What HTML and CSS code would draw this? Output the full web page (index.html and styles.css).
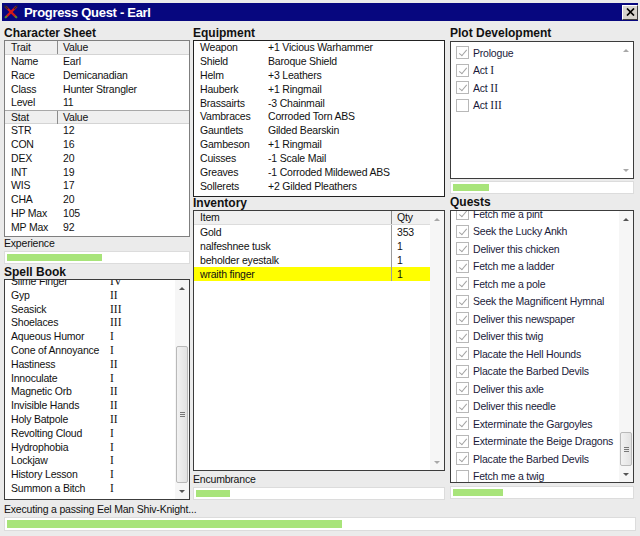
FILE: index.html
```html
<!DOCTYPE html>
<html>
<head>
<meta charset="utf-8">
<title>Progress Quest - Earl</title>
<link rel="stylesheet" href="styles.css">
</head>
<body>
<div class="window">
  <div class="titlebar">
    <svg class="app-icon" width="14" height="14" viewBox="0 0 14 14">
      <path d="M1.5 1.5 L12.5 12.5" stroke="#d41a1a" stroke-width="2.4"/>
      <path d="M12.5 1.5 L1.5 12.5" stroke="#d41a1a" stroke-width="2.4"/>
      <path d="M0.5 0.5 L4 4" stroke="#2a2a2a" stroke-width="1.6"/>
      <path d="M10 4 L13.5 0.5" stroke="#2a2a2a" stroke-width="1.2"/>
      <path d="M1 13 L3 11" stroke="#3aa13a" stroke-width="1.6"/>
      <path d="M11 11 L13 13" stroke="#3aa13a" stroke-width="1.6"/>
    </svg>
    <span class="title">Progress Quest - Earl</span>
    <div class="close">
      <svg width="9" height="8" viewBox="0 0 9 8"><path d="M1 0.5 L8 7.5 M8 0.5 L1 7.5" stroke="#000" stroke-width="1.7"/></svg>
    </div>
  </div>

  <div class="columns">
    <!-- LEFT -->
    <div class="col">
      <h2 class="heading">Character Sheet</h2>
      <div class="box sheet">
        <div class="thead"><span class="c1">Trait</span><span class="c2">Value</span></div>
        <div class="tr"><span class="c1">Name</span><span class="c2">Earl</span></div>
        <div class="tr"><span class="c1">Race</span><span class="c2">Demicanadian</span></div>
        <div class="tr"><span class="c1">Class</span><span class="c2">Hunter Strangler</span></div>
        <div class="tr"><span class="c1">Level</span><span class="c2">11</span></div>
        <div class="thead second"><span class="c1">Stat</span><span class="c2">Value</span></div>
        <div class="tr"><span class="c1">STR</span><span class="c2">12</span></div>
        <div class="tr"><span class="c1">CON</span><span class="c2">16</span></div>
        <div class="tr"><span class="c1">DEX</span><span class="c2">20</span></div>
        <div class="tr"><span class="c1">INT</span><span class="c2">19</span></div>
        <div class="tr"><span class="c1">WIS</span><span class="c2">17</span></div>
        <div class="tr"><span class="c1">CHA</span><span class="c2">20</span></div>
        <div class="tr"><span class="c1">HP Max</span><span class="c2">105</span></div>
        <div class="tr"><span class="c1">MP Max</span><span class="c2">92</span></div>
      </div>
      <div class="label">Experience</div>
      <div class="bar"><div class="fill" style="width:53%"></div></div>
      <h2 class="heading spell-heading">Spell Book</h2>
      <div class="box listbox spells">
        <div class="list">
          <div class="list-inner spell-rows">
            <div class="sr"><span>Slime Finger</span><span class="rn">IV</span></div>
            <div class="sr"><span>Gyp</span><span class="rn">II</span></div>
            <div class="sr"><span>Seasick</span><span class="rn">III</span></div>
            <div class="sr"><span>Shoelaces</span><span class="rn">III</span></div>
            <div class="sr"><span>Aqueous Humor</span><span class="rn">I</span></div>
            <div class="sr"><span>Cone of Annoyance</span><span class="rn">I</span></div>
            <div class="sr"><span>Hastiness</span><span class="rn">II</span></div>
            <div class="sr"><span>Innoculate</span><span class="rn">I</span></div>
            <div class="sr"><span>Magnetic Orb</span><span class="rn">II</span></div>
            <div class="sr"><span>Invisible Hands</span><span class="rn">II</span></div>
            <div class="sr"><span>Holy Batpole</span><span class="rn">II</span></div>
            <div class="sr"><span>Revolting Cloud</span><span class="rn">I</span></div>
            <div class="sr"><span>Hydrophobia</span><span class="rn">I</span></div>
            <div class="sr"><span>Lockjaw</span><span class="rn">I</span></div>
            <div class="sr"><span>History Lesson</span><span class="rn">I</span></div>
            <div class="sr"><span>Summon a Bitch</span><span class="rn">I</span></div>
          </div>
        </div>
        <div class="scrollbar">
          <div class="sb-btn"><span class="arrow up"></span></div>
          <div class="track"><div class="thumb spell-thumb"><span class="grip"></span></div></div>
          <div class="sb-btn"><span class="arrow down"></span></div>
        </div>
      </div>
    </div>

    <!-- MIDDLE -->
    <div class="col">
      <h2 class="heading">Equipment</h2>
      <div class="box equip">
        <div class="er"><span>Weapon</span><span>+1 Vicious Warhammer</span></div>
        <div class="er"><span>Shield</span><span>Baroque Shield</span></div>
        <div class="er"><span>Helm</span><span>+3 Leathers</span></div>
        <div class="er"><span>Hauberk</span><span>+1 Ringmail</span></div>
        <div class="er"><span>Brassairts</span><span>-3 Chainmail</span></div>
        <div class="er"><span>Vambraces</span><span>Corroded Torn ABS</span></div>
        <div class="er"><span>Gauntlets</span><span>Gilded Bearskin</span></div>
        <div class="er"><span>Gambeson</span><span>+1 Ringmail</span></div>
        <div class="er"><span>Cuisses</span><span>-1 Scale Mail</span></div>
        <div class="er"><span>Greaves</span><span>-1 Corroded Mildewed ABS</span></div>
        <div class="er"><span>Sollerets</span><span>+2 Gilded Pleathers</span></div>
      </div>
      <h2 class="heading">Inventory</h2>
      <div class="box listbox inventory">
        <div class="list">
          <div class="ihead"><span class="i1">Item</span><span class="i2">Qty</span></div>
          <div class="ir"><span class="i1">Gold</span><span class="i2">353</span></div>
          <div class="ir"><span class="i1">nalfeshnee tusk</span><span class="i2">1</span></div>
          <div class="ir"><span class="i1">beholder eyestalk</span><span class="i2">1</span></div>
          <div class="ir selected"><span class="i1">wraith finger</span><span class="i2">1</span></div>
        </div>
        <div class="scrollbar">
          <div class="sb-btn"><span class="arrow up light"></span></div>
          <div class="track"></div>
          <div class="sb-btn"><span class="arrow down light"></span></div>
        </div>
      </div>
      <div class="label enc-label">Encumbrance</div>
      <div class="bar"><div class="fill" style="width:14%"></div></div>
    </div>

    <!-- RIGHT -->
    <div class="col">
      <h2 class="heading">Plot Development</h2>
      <div class="box listbox plot">
        <div class="list">
          <div class="list-inner plot-rows">
            <div class="cr"><span class="cb checked"></span><span>Prologue</span></div>
            <div class="cr"><span class="cb checked"></span><span>Act <span class="rn">I</span></span></div>
            <div class="cr"><span class="cb checked"></span><span>Act <span class="rn">II</span></span></div>
            <div class="cr"><span class="cb"></span><span>Act <span class="rn">III</span></span></div>
          </div>
        </div>
        <div class="scrollbar plain">
          <div class="sb-btn"><span class="arrow up light"></span></div>
          <div class="track"></div>
          <div class="sb-btn"><span class="arrow down light"></span></div>
        </div>
      </div>
      <div class="bar plot-bar"><div class="fill" style="width:20%"></div></div>
      <h2 class="heading quest-heading">Quests</h2>
      <div class="box listbox quests">
        <div class="list">
          <div class="list-inner quest-rows">
            <div class="cr"><span class="cb checked"></span><span>Fetch me a pint</span></div>
            <div class="cr"><span class="cb checked"></span><span>Seek the Lucky Ankh</span></div>
            <div class="cr"><span class="cb checked"></span><span>Deliver this chicken</span></div>
            <div class="cr"><span class="cb checked"></span><span>Fetch me a ladder</span></div>
            <div class="cr"><span class="cb checked"></span><span>Fetch me a pole</span></div>
            <div class="cr"><span class="cb checked"></span><span>Seek the Magnificent Hymnal</span></div>
            <div class="cr"><span class="cb checked"></span><span>Deliver this newspaper</span></div>
            <div class="cr"><span class="cb checked"></span><span>Deliver this twig</span></div>
            <div class="cr"><span class="cb checked"></span><span>Placate the Hell Hounds</span></div>
            <div class="cr"><span class="cb checked"></span><span>Placate the Barbed Devils</span></div>
            <div class="cr"><span class="cb checked"></span><span>Deliver this axle</span></div>
            <div class="cr"><span class="cb checked"></span><span>Deliver this needle</span></div>
            <div class="cr"><span class="cb checked"></span><span>Exterminate the Gargoyles</span></div>
            <div class="cr"><span class="cb checked"></span><span>Exterminate the Beige Dragons</span></div>
            <div class="cr"><span class="cb checked"></span><span>Placate the Barbed Devils</span></div>
            <div class="cr"><span class="cb"></span><span>Fetch me a twig</span></div>
          </div>
        </div>
        <div class="scrollbar">
          <div class="sb-btn"><span class="arrow up"></span></div>
          <div class="track"><div class="thumb quest-thumb"><span class="grip"></span></div></div>
          <div class="sb-btn"><span class="arrow down"></span></div>
        </div>
      </div>
      <div class="bar quest-bar"><div class="fill" style="width:28%"></div></div>
    </div>
  </div>

  <div class="status">Executing a passing Eel Man Shiv-Knight...</div>
  <div class="bar task-bar"><div class="fill" style="width:53.5%"></div></div>
</div>
</body>
</html>
```

FILE: styles.css
```css
* { box-sizing: border-box; margin: 0; padding: 0; }

html, body {
  width: 640px;
  height: 536px;
  overflow: hidden;
}

body {
  background: #ebebeb;
  font-family: "Liberation Sans", Arial, sans-serif;
  font-size: 10.5px;
  letter-spacing: -0.2px;
  color: #111;
}

.window {
  width: 640px;
  height: 536px;
  padding: 3px 2px 0 2px;
  display: flex;
  flex-direction: column;
}

/* Title bar */
.titlebar {
  height: 18px;
  background: #07077f;
  display: flex;
  align-items: center;
  padding-left: 2px;
}
.app-icon { flex: none; }
.title {
  margin-left: 6px;
  color: #fff;
  font-weight: bold;
  font-size: 13px;
  letter-spacing: -0.3px;
  flex: 1;
}
.close {
  width: 16px;
  height: 15px;
  background: #d6d3ce;
  border-top: 1px solid #fff;
  border-left: 1px solid #fff;
  border-right: 1px solid #404040;
  border-bottom: 1px solid #404040;
  display: flex;
  align-items: center;
  justify-content: center;
}

/* Columns */
.columns {
  margin: 6px 0 0 2px;
  display: grid;
  grid-template-columns: 186px 252px 186px;
  column-gap: 3px;
  align-items: start;
}
.columns .col:nth-child(3) { margin-left: 2px; }
.col {
  display: flex;
  flex-direction: column;
}

.heading {
  font-size: 12px;
  font-weight: bold;
  letter-spacing: 0;
  height: 13px;
  line-height: 13px;
  color: #111;
}

.box {
  background: #fff;
  border: 1px solid #3c3c3c;
}

.label {
  height: 13px;
  line-height: 13px;
}

/* Bars */
.bar {
  height: 13px;
  background: #fff;
  border: 1px solid #dcdcdc;
  padding: 2px;
}
.fill {
  height: 100%;
  background: #a8e47a;
}

/* Character sheet */
.sheet {
  height: 197px;
  border-color: #7f7f7f;
}
.thead, .tr {
  display: grid;
  grid-template-columns: 53px 1fr;
}
.thead {
  height: 14px;
  line-height: 13px;
  background: #efefef;
  border-bottom: 1px solid #d4d4d4;
}
.thead.second { border-top: 1px solid #a8a8a8; height: 14px; }
.thead .c1 { border-right: 1px solid #8c8c8c; }
.tr { height: 13.8px; line-height: 13.8px; }
.c1 { padding-left: 6px; }
.c2 { padding-left: 5px; }
.label + .bar { margin-top: 1px; }

.spell-heading { margin-top: 1px; height: 14px; line-height: 14px; }

/* List boxes with scrollbars */
.listbox {
  display: flex;
  overflow: hidden;
}
.list {
  flex: 1;
  overflow: hidden;
}
.scrollbar {
  width: 14px;
  flex: none;
  background: #f6f6f6;
  display: flex;
  flex-direction: column;
}
.scrollbar.plain { background: #fff; }
.sb-btn {
  height: 16px;
  display: flex;
  align-items: center;
  justify-content: center;
  flex: none;
}
.track {
  flex: 1;
  display: flex;
  flex-direction: column;
  justify-content: flex-end;
}
.arrow {
  width: 0;
  height: 0;
  border-left: 3px solid transparent;
  border-right: 3px solid transparent;
}
.arrow.up { border-bottom: 3px solid #555; }
.arrow.down { border-top: 3px solid #555; }
.arrow.up.light { border-bottom-color: #a8a8a8; }
.arrow.down.light { border-top-color: #a8a8a8; }

.thumb {
  margin: 0 1px;
  background: linear-gradient(to right, #f2f2f2, #e2e2e2);
  border: 1px solid #b9b9b9;
  border-radius: 2px;
  display: flex;
  align-items: center;
  justify-content: center;
}
.grip {
  width: 5px;
  height: 5px;
  border-top: 1px solid #777;
  border-bottom: 1px solid #777;
  position: relative;
}
.grip::after {
  content: "";
  position: absolute;
  left: 0;
  right: 0;
  top: 1px;
  border-top: 1px solid #777;
}

/* Spell book */
.spells { height: 221px; }
.spell-thumb { height: 137px; }
.spell-rows { margin-top: -5px; }
.sr {
  display: grid;
  grid-template-columns: 99px 1fr;
  padding-left: 6px;
  height: 13.8px;
  line-height: 13.8px;
}
.rn {
  font-family: "Liberation Serif", "Times New Roman", serif;
  font-size: 11.5px;
  letter-spacing: 0;
}

/* Equipment */
.equip {
  height: 157px;
  border-color: #222;
}
.er {
  display: grid;
  grid-template-columns: 68px 1fr;
  padding-left: 6px;
  height: 13.9px;
  line-height: 13.9px;
}

/* Inventory */
.inventory { height: 261px; }
.ihead, .ir {
  display: grid;
  grid-template-columns: 197px 1fr;
}
.ihead {
  height: 14px;
  line-height: 13px;
  background: #f0f0f0;
  border-bottom: 1px solid #dcdcdc;
}
.ir { height: 14px; line-height: 14px; }
.i1 { padding-left: 6px; }
.i2 { padding-left: 5px; border-left: 1px solid #9c9c9c; }
.ihead .i2 { border-left-color: #8c8c8c; }
.ir.selected { background: #ffff00; }
.enc-label { margin-top: 2px; }

/* Checkbox lists */
.cr {
  display: flex;
  align-items: center;
  padding-left: 5px;
  height: 17.5px;
  color: #1a1a3a;
}
.cb {
  width: 13px;
  height: 13px;
  border: 1px solid #b8b8b8;
  background: #fff;
  margin-right: 4px;
  flex: none;
  position: relative;
}
.cb.checked::after {
  content: "";
  position: absolute;
  left: 4px;
  top: 1px;
  width: 3px;
  height: 7px;
  border-right: 1.5px solid #a4a4a4;
  border-bottom: 1.5px solid #a4a4a4;
  transform: rotate(40deg);
}

.plot {
  height: 138px;
  margin-top: 1px;
}
.plot-rows { padding-top: 2px; }
.plot-bar { margin-top: 2px; }

.quest-heading { margin-top: 2px; }
.quests {
  height: 273px;
  margin-top: 1px;
}
.quest-rows { margin-top: -6px; }
.quest-thumb { height: 34px; }
.quest-bar { margin-top: 3px; }

/* Status */
.status {
  margin: 3px 0 0 2px;
  height: 13px;
  line-height: 13px;
}
.task-bar {
  margin: 1px 2px 0 2px;
  height: 14px;
}
```
